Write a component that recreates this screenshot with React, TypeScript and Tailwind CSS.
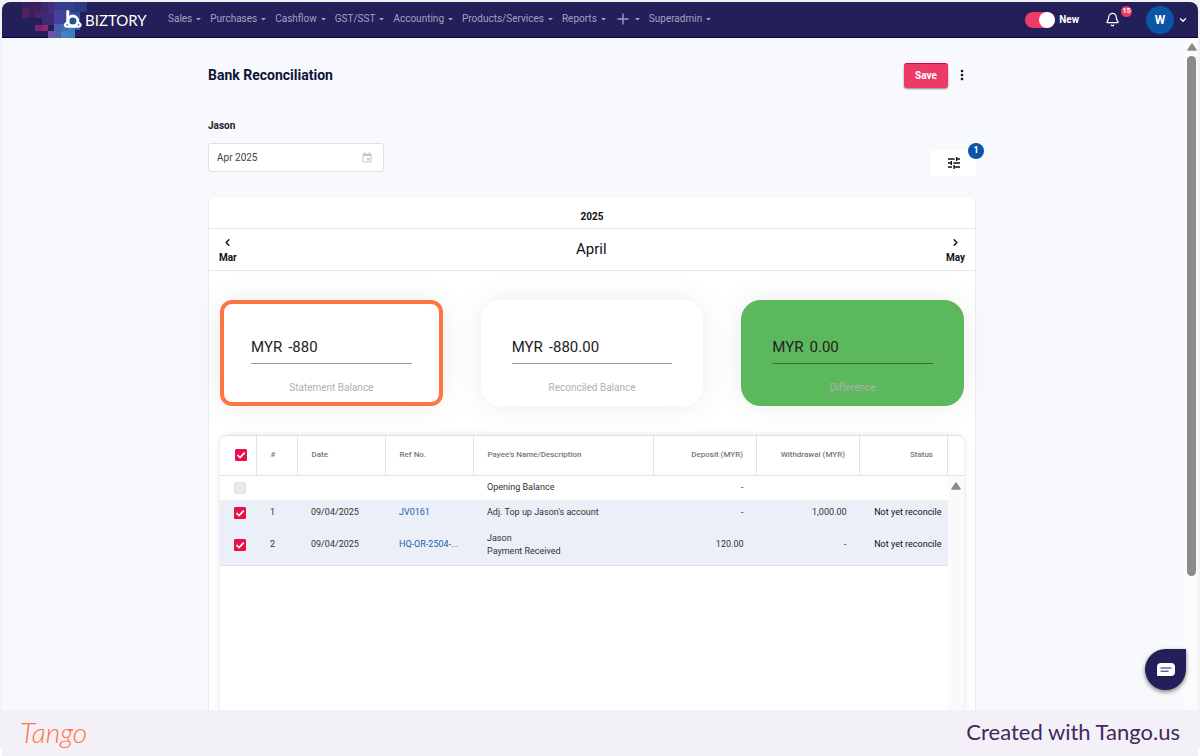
import { Bell, ChevronDown, ChevronLeft, ChevronRight } from "lucide-react";
import { MdEvent, MdMoreVert, MdTune } from "react-icons/md";

interface Transaction {
  id: number;
  no: string;
  date: string;
  refNo: string;
  description: string[];
  deposit: string;
  withdrawal: string;
  status: string;
}

const navItems = [
  "Sales",
  "Purchases",
  "Cashflow",
  "GST/SST",
  "Accounting",
  "Products/Services",
  "Reports",
  "+",
  "Superadmin",
];

const transactions: Transaction[] = [
  {
    id: 0,
    no: "",
    date: "",
    refNo: "",
    description: ["Opening Balance"],
    deposit: "-",
    withdrawal: "",
    status: "",
  },
  {
    id: 1,
    no: "1",
    date: "09/04/2025",
    refNo: "JV0161",
    description: ["Adj. Top up Jason's account"],
    deposit: "-",
    withdrawal: "1,000.00",
    status: "Not yet reconcile",
  },
  {
    id: 2,
    no: "2",
    date: "09/04/2025",
    refNo: "HQ-OR-2504-...",
    description: ["Jason", "Payment Received"],
    deposit: "120.00",
    withdrawal: "-",
    status: "Not yet reconcile",
  },
];

// Coloured squares behind the logo: x, y, width, height, fill
const pixels: [number, number, number, number, string][] = [
  [8, 0, 12, 4, "#2a1f5c"],
  [20, 0, 20, 6, "#38205e"],
  [20, 6, 7, 10, "#502262"],
  [27, 4, 13, 6, "#40215f"],
  [27, 10, 6, 6, "#37205e"],
  [33, 10, 8, 6, "#4c2468"],
  [33, 23, 7, 6, "#7a2370"],
  [40, 0, 6, 12, "#3a2671"],
  [46, 0, 6, 12, "#42307f"],
  [40, 12, 13, 11, "#3b2a76"],
  [40, 23, 6, 6, "#8c2775"],
  [46, 29, 6, 7, "#7650a1"],
  [52, 0, 7, 8, "#353a8c"],
  [59, 0, 7, 8, "#333d8c"],
  [52, 8, 7, 14, "#46409c"],
  [59, 8, 7, 14, "#3a4596"],
  [52, 22, 7, 14, "#4a60ac"],
  [59, 22, 7, 7, "#3f6db0"],
  [59, 29, 7, 7, "#4880bf"],
  [66, 0, 6, 10, "#313f8a"],
  [72, 0, 6, 10, "#2c3a80"],
  [66, 10, 12, 12, "#304f9b"],
  [66, 22, 7, 14, "#397fbd"],
  [73, 22, 5, 6, "#2d5ea0"],
  [78, 0, 7, 10, "#2a3a7c"],
];

function Checkbox({ checked, disabled, label }: { checked?: boolean; disabled?: boolean; label: string }) {
  return (
    <span className="grid size-3">
      <input
        type="checkbox"
        aria-label={label}
        defaultChecked={checked}
        disabled={disabled}
        className="peer col-start-1 row-start-1 size-3 appearance-none rounded-[1px] border border-gray-400 bg-white checked:border-[#e8114f] checked:bg-[#e8114f] disabled:border-[#dedede] disabled:bg-[#e9e9e9]"
      />
      <svg
        viewBox="0 0 12 12"
        className="pointer-events-none col-start-1 row-start-1 hidden size-3 peer-checked:block"
      >
        <path d="M2.5 6 5 8.5 9.7 3.6" fill="none" stroke="#fff" strokeWidth="1.6" />
      </svg>
    </span>
  );
}

function Logo() {
  return (
    <a href="#" className="grid h-9 w-[158px] shrink-0 items-center">
      <svg viewBox="0 0 158 36" className="col-start-1 row-start-1 h-9 w-[158px]">
        {pixels.map(([x, y, w, h, fill]) => (
          <rect key={`${x}-${y}`} x={x} y={y} width={w} height={h} fill={fill} />
        ))}
        <g fill="none" stroke="#fff" strokeLinecap="round">
          <path d="M65.800 9.500V20" strokeWidth="3" />
          <circle cx="70.800" cy="19" r="5" strokeWidth="2.800" />
          <path d="M64.200 21c-2 1.800-1.500 3.600.9 3.600h11.200c2.500 0 3-1.800 1-3.600" strokeWidth="2.300" />
        </g>
      </svg>
      <span className="col-start-1 row-start-1 pl-[83px] font-[Lato,sans-serif] text-[15px] leading-4 text-white">
        BIZTORY
      </span>
    </a>
  );
}

function Caret() {
  return (
    <svg viewBox="0 0 5 3" className="mt-px h-[3px] w-[5px]">
      <path d="M0 0h5L2.500 2.500z" fill="currentColor" />
    </svg>
  );
}

function Header() {
  return (
    <header className="flex h-9 items-center rounded-t-lg border-b border-[#08005a] bg-[#231f58] text-[#a3a1c4]">
      <Logo />
      <nav className="ml-2 flex flex-1 items-center gap-[9px] pb-[2px]">
        {navItems.map((item) => (
          <button key={item} type="button" className="flex items-center gap-1 text-[10px] leading-4">
            {item === "+" ? (
              <svg viewBox="0 0 12 12" className="mx-[2px] size-3" aria-label="Add">
                <path d="M6 .5v11M.5 6h11" stroke="currentColor" strokeWidth="1.300" />
              </svg>
            ) : (
              item
            )}
            <Caret />
          </button>
        ))}
      </nav>
      <label className="flex items-center gap-1 text-[10px] font-bold text-white">
        <span className="grid items-center">
          <input
            type="checkbox"
            role="switch"
            defaultChecked
            className="peer col-start-1 row-start-1 h-4 w-[30px] appearance-none rounded-full bg-gray-500 checked:bg-[#ee3a66]"
          />
          <span className="pointer-events-none col-start-1 row-start-1 size-4 rounded-full bg-white peer-checked:ml-[14px]" />
        </span>
        New
      </label>
      <button type="button" aria-label="Notifications" className="relative ml-[26px] text-white">
        <Bell className="size-[15px]" strokeWidth={2} />
        <span className="absolute -top-[6px] left-4 flex size-[11px] items-center justify-center rounded-full bg-[#ee3a66] text-[7px] font-bold">
          15
        </span>
      </button>
      <button type="button" className="mr-[10px] ml-[26px] flex items-center gap-1 text-white">
        <span className="flex size-7 items-center justify-center rounded-full bg-[#0a55a8] text-xs font-bold">
          W
        </span>
        <ChevronDown className="size-[10px]" strokeWidth={3} />
      </button>
    </header>
  );
}

function BalanceCard({ label, value, variant }: { label: string; value: string; variant?: "active" | "success" }) {
  const id = label.toLowerCase().replace(" ", "-");
  const style =
    variant === "active"
      ? "rounded-xl border-[#ff7442] bg-white"
      : variant === "success"
        ? "rounded-[20px] border-[#5cb85c] bg-[#5cb85c]"
        : "rounded-[20px] border-white bg-white";

  return (
    <div className={`flex h-[106px] flex-1 flex-col border-4 px-[27px] pt-8 shadow-[0_0_30px_rgba(0,0,0,0.08)] ${style}`}>
      <div className="flex h-7 items-center gap-[6px] border-b border-black/40 pb-1 text-[15px] text-[#222]">
        <span>MYR</span>
        <input id={id} defaultValue={value} className="w-full min-w-0 bg-transparent outline-none" />
      </div>
      <label htmlFor={id} className="mt-4 text-center text-[10px] leading-4 text-[#b0b0b0]">
        {label}
      </label>
    </div>
  );
}

function ScrollArrow() {
  return (
    <svg viewBox="0 0 10 8" className="h-2 w-[10px] shrink-0">
      <path d="M5 1 9 7H1z" fill="#8b8b8b" stroke="#8b8b8b" strokeWidth="1.500" strokeLinejoin="round" />
    </svg>
  );
}

function TransactionTable() {
  const head = "border-r border-[#e2e2e2] px-[14px] font-medium";
  return (
    <div className="mx-[11px] flex flex-1 rounded-t-lg border-t border-[#e2e2e2] shadow-[0_0_6px_rgba(0,0,0,0.12)]">
      <div className="min-w-0 flex-1">
        <table className="w-full table-fixed border-collapse text-left text-[9px] text-[#333]">
          <colgroup>
            <col className="w-9" />
            <col className="w-[41px]" />
            <col className="w-[88px]" />
            <col className="w-[88px]" />
            <col />
            <col className="w-[103px]" />
            <col className="w-[103px]" />
            <col className="w-[88px]" />
          </colgroup>
          <thead>
            <tr className="h-[39px] border-b border-[#e2e2e2] text-[8px] text-[#777]">
              <th className="border-r border-[#e2e2e2] pl-[15px]">
                <Checkbox checked label="Select all" />
              </th>
              <th className={head}>#</th>
              <th className={head}>Date</th>
              <th className={head}>Ref No.</th>
              <th className={head}>Payee's Name/Description</th>
              <th className={`${head} pr-[13px] text-right`}>Deposit (MYR)</th>
              <th className={`${head} text-right`}>Withdrawal (MYR)</th>
              <th className={`${head} text-right`}>Status</th>
            </tr>
          </thead>
          <tbody>
            {transactions.map((row) => (
              <tr
                key={row.id}
                className={row.no ? "h-[25px] bg-[#ebeff7] last:h-10 last:border-b last:border-[#dcdfe6]" : "h-[25px]"}
              >
                <td className="pl-[14px]">
                  <Checkbox checked={row.no !== ""} disabled={row.no === ""} label={`Select ${row.description[0]}`} />
                </td>
                <td className="px-[14px]">{row.no}</td>
                <td className="px-[14px]">{row.date}</td>
                <td className="pl-[14px] whitespace-nowrap">
                  {row.refNo && (
                    <a href="#" className="text-[#1c5fae]">
                      {row.refNo}
                    </a>
                  )}
                </td>
                <td className="px-[14px] leading-[13px]">
                  {row.description.map((line) => (
                    <p key={line}>{line}</p>
                  ))}
                </td>
                <td className="px-[13px] text-right">{row.deposit}</td>
                <td className="px-[13px] text-right">{row.withdrawal}</td>
                <td className="pr-[6px] text-right whitespace-nowrap text-[#111]">{row.status}</td>
              </tr>
            ))}
          </tbody>
        </table>
      </div>
      <div className="flex w-4 flex-col">
        <div className="h-10 border-b border-[#e2e2e2]" />
        <div className="flex flex-1 justify-center bg-[#fafafa] pt-[6px]">
          <ScrollArrow />
        </div>
      </div>
    </div>
  );
}

export default function App() {
  return (
    <div className="flex min-h-screen flex-col rounded-b-xl bg-[#f3f1f7] px-[2px] pt-[2px] font-[Roboto,sans-serif] text-[#111]">
      <div className="relative flex flex-1 flex-col">
        <Header />
        <div className="flex flex-1 bg-[#f8f9fd]">
          <main className="mx-auto flex w-full max-w-[768px] flex-col">
            <div className="mt-6 flex h-[26px] items-center">
              <h1 className="flex-1 text-sm font-bold text-[#0f1439]">Bank Reconciliation</h1>
              <button
                type="button"
                className="h-[25px] w-11 rounded-[3px] border-t border-[#e0004d] bg-[#ee3a66] text-[10px] font-bold text-white shadow-[0_1px_2px_rgba(0,0,0,0.45)]"
              >
                Save
              </button>
              <button type="button" aria-label="More" className="mr-[6px] ml-[6px]">
                <MdMoreVert className="size-4" />
              </button>
            </div>

            <div className="mt-[30px] flex items-end justify-between">
              <div className="flex flex-col gap-[9px]">
                <label htmlFor="month" className="text-[10px] leading-4 font-bold text-[#222]">
                  Jason
                </label>
                <div className="flex h-[29px] w-44 items-center rounded-[3px] border border-[#dfe1e6] bg-white pr-[10px] pl-2">
                  <input
                    id="month"
                    defaultValue="Apr 2025"
                    className="min-w-0 flex-1 bg-transparent text-[10px] text-[#444] outline-none"
                  />
                  <MdEvent className="size-3 text-[#c3c7cf]" />
                </div>
              </div>
              <button
                type="button"
                aria-label="Filters"
                className="relative -mb-1 flex h-[26px] w-[45px] items-center justify-center rounded-[3px] bg-white"
              >
                <MdTune className="size-4" />
                <span className="absolute -top-[7px] -right-2 flex size-4 items-center justify-center rounded-full bg-[#0a55a8] text-[9px] font-bold text-white">
                  1
                </span>
              </button>
            </div>

            <section className="mt-[26px] flex flex-1 flex-col rounded-t-[3px] border-x border-[#ededf1] bg-white">
              <div className="flex h-[31px] items-center justify-center border-b border-[#e8e8e8] pt-[6px] text-[10px] font-bold">
                2025
              </div>
              <div className="flex h-[42px] items-center justify-between border-b border-[#e8e8e8] px-[10px] text-[10px] font-bold">
                <button type="button" className="flex flex-col items-center gap-1 pt-px leading-3">
                  <ChevronLeft className="size-[11px]" strokeWidth={3} />
                  Mar
                </button>
                <h2 className="text-[15px] font-normal">April</h2>
                <button type="button" className="flex flex-col items-center gap-1 pt-px leading-3">
                  <ChevronRight className="size-[11px]" strokeWidth={3} />
                  May
                </button>
              </div>
              <div className="my-[29px] flex gap-[38px] px-[11px]">
                <BalanceCard label="Statement Balance" value="-880" variant="active" />
                <BalanceCard label="Reconciled Balance" value="-880.00" />
                <BalanceCard label="Difference" value="0.00" variant="success" />
              </div>
              <TransactionTable />
            </section>
          </main>
          <div className="flex w-4 flex-col items-center gap-[5px] bg-[#fbfbfc] pt-[5px] pl-[3px]">
            <ScrollArrow />
            <div className="h-[78%] w-[9px] rounded-full bg-[#8b8b8b]" />
          </div>
        </div>
        <button
          type="button"
          aria-label="Open chat"
          className="absolute right-3 bottom-5 flex size-[41px] items-center justify-center rounded-full rounded-tr-[4px] bg-[#231f58] shadow-[0_2px_4px_rgba(0,0,0,0.5)]"
        >
          <svg viewBox="0 0 18 14" className="h-[14px] w-[18px]">
            <path d="M4 0h10a4 4 0 0 1 4 4v5a4 4 0 0 1-4 4H1a1 1 0 0 1-1-1V4a4 4 0 0 1 4-4z" fill="#fff" />
            <path d="M3.500 5h11M3.500 8.200h8" stroke="#231f58" strokeWidth="1" />
          </svg>
        </button>
      </div>
      <footer className="relative flex h-[46px] items-center justify-between bg-[#f3f1f7] px-[18px] pb-[2px] font-[Lato,sans-serif]">
        <a href="#" className="text-[28px] leading-8 font-light text-[#ff7442] italic">
          Tango
        </a>
        <p className="text-[22px] leading-8 text-[#41295a]">Created with Tango.us</p>
      </footer>
    </div>
  );
}
